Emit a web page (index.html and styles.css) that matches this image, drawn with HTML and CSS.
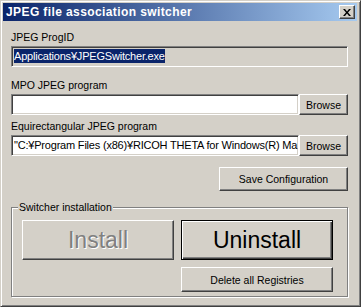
FILE: index.html
```html
<!DOCTYPE html>
<html lang="en">
<head>
  <meta charset="UTF-8" />
  <title>JPEG file association switcher</title>
  <link rel="stylesheet" href="styles.css">
</head>
<body>
  <div class="window">
    <div class="titlebar">
      <span class="title">JPEG file association switcher</span>
      <button class="close" aria-label="Close">
        <svg width="8" height="7" viewBox="0 0 8 7">
          <path d="M0 0h2l2 2.5L6 0h2L5 3.5 8 7H6L4 4.5 2 7H0l3-3.5z" fill="#000"/>
        </svg>
      </button>
    </div>

    <div class="client">
      <div class="label">JPEG ProgID</div>
      <div class="field readonly"><span class="selected">Applications¥JPEGSwitcher.exe</span></div>

      <div class="label label-mpo">MPO JPEG program</div>
      <div class="row">
        <div class="field"></div>
        <button class="btn browse">Browse</button>
      </div>

      <div class="label label-equi">Equirectangular JPEG program</div>
      <div class="row">
        <div class="field">"C:¥Program Files (x86)¥RICOH THETA for Windows(R) Ma</div>
        <button class="btn browse">Browse</button>
      </div>

      <div class="actions">
        <button class="btn save">Save Configuration</button>
      </div>

      <fieldset class="group">
        <legend>Switcher installation</legend>
        <div class="install-grid">
          <button class="btn big" disabled>Install</button>
          <button class="btn big default">Uninstall</button>
          <button class="btn delete">Delete all Registries</button>
        </div>
      </fieldset>
    </div>
  </div>
</body>
</html>
```

FILE: styles.css
```css
:root {
  --face: #d4d0c8;
  --shadow: #808080;
  --dark: #404040;
  --light: #ffffff;
}

body {
  margin: 0;
  font-family: "Liberation Sans", Arial, sans-serif;
  font-size: 10.5px;
  color: #000;
  background: var(--face);
}

.window {
  width: 361px;
  height: 307px;
  box-sizing: border-box;
  background: var(--face);
  border: 1px solid;
  border-color: var(--face) var(--dark) var(--dark) var(--face);
  box-shadow: inset 1px 1px var(--light), inset -1px -1px var(--shadow);
  padding: 2px 3px 2px 2px;
}

.titlebar {
  height: 18px;
  display: flex;
  align-items: center;
  justify-content: space-between;
  background: linear-gradient(to right, #0a246a, #a6caf0);
  padding: 0 2px 0 3px;
}

.title {
  color: #fff;
  font-weight: bold;
  font-size: 12px;
  letter-spacing: 0.4px;
  line-height: 18px;
}

.close {
  width: 16px;
  height: 14px;
  padding: 0;
  display: flex;
  align-items: center;
  justify-content: center;
  background: var(--face);
  border: 1px solid;
  border-color: var(--light) var(--dark) var(--dark) var(--light);
  box-shadow: inset -1px -1px var(--shadow);
}

.client {
  padding: 10px 9px 0 8px;
}

.label {
  line-height: 13px;
  margin-bottom: 2px;
  white-space: nowrap;
}

.label-mpo {
  margin-top: 12px;
}

.label-equi {
  margin-top: 5px;
}

.field {
  height: 21px;
  box-sizing: border-box;
  background: #fff;
  border: 1px solid;
  border-color: var(--shadow) var(--light) var(--light) var(--shadow);
  box-shadow: inset 1px 1px var(--dark), inset -1px -1px var(--face);
  padding: 2px 2px 0;
  font-size: 11px;
  letter-spacing: -0.2px;
  line-height: 14px;
  white-space: nowrap;
  overflow: hidden;
}

.field.readonly {
  background: var(--face);
}

.selected {
  display: inline-block;
  background: #0a246a;
  color: #fff;
}

.row {
  display: flex;
}

.row .field {
  flex: 1;
  min-width: 0;
}

.btn {
  box-sizing: border-box;
  padding: 0;
  font-family: inherit;
  font-size: 10.5px;
  color: #000;
  background: var(--face);
  border: 1px solid;
  border-color: var(--light) var(--dark) var(--dark) var(--light);
  box-shadow: inset -1px -1px var(--shadow);
}

.browse {
  width: 49px;
  height: 21px;
}

.actions {
  display: flex;
  justify-content: flex-end;
  margin-top: 11px;
}

.save {
  width: 129px;
  height: 24px;
}

.group {
  margin: 10px 1px 0 0;
  padding: 6px 14px 4px 10px;
  border: 1px solid var(--shadow);
  box-shadow: inset 1px 1px var(--light), 1px 1px var(--light);
}

.group legend {
  margin-left: -4px;
  padding: 0 1px;
  line-height: 13px;
  background: var(--face);
}

.install-grid {
  display: grid;
  grid-template-columns: 152px 152px;
  column-gap: 7px;
  row-gap: 7px;
}

.big {
  height: 40px;
  font-size: 23px;
}

.big:disabled {
  color: var(--shadow);
  text-shadow: 1px 1px 0 var(--light);
}

.default {
  border-color: #000;
  box-shadow: inset 1px 1px var(--light), inset -1px -1px var(--dark), inset -2px -2px var(--shadow);
}

.delete {
  grid-column: 2;
  height: 25px;
}
```
